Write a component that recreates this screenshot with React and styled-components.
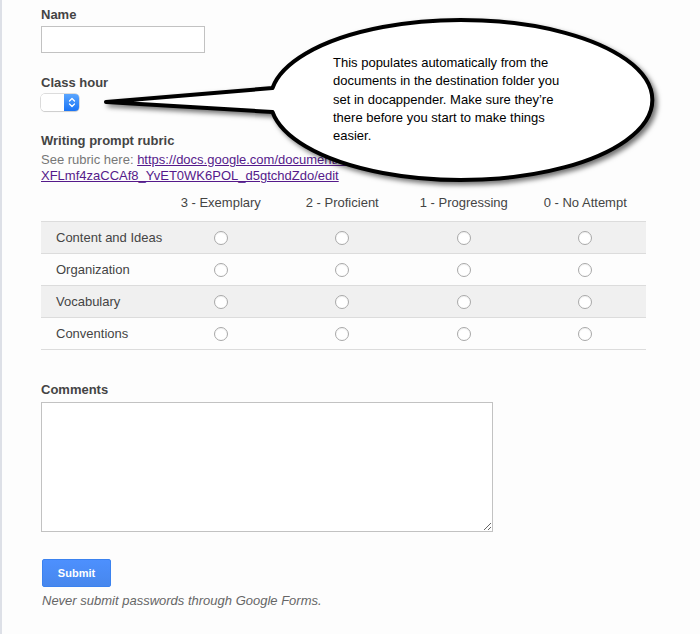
import React from "react";
import styled, { createGlobalStyle } from "styled-components";

const Global = createGlobalStyle`
  html, body { margin: 0; padding: 0; background: #fdfdfd; }
  body { font-family: "Liberation Sans", Arial, sans-serif; font-size: 13px; color: #444; }
`;

const Page = styled.div`
  position: relative;
  min-height: 634px;
  box-sizing: border-box;
  border-left: 2px solid #dde0e7;
  padding: 7px 0 0 39px;
`;

const Label = styled.div`
  font-weight: bold;
  font-size: 13px;
  line-height: 16px;
  color: #444;
  margin-top: ${(p) => p.$mt || 0}px;
`;

const TextInput = styled.input`
  display: block;
  box-sizing: border-box;
  width: 164px;
  height: 27px;
  margin-top: 3px;
  border: 1px solid #c2c2c2;
  background: #fff;
  padding: 0 4px;
`;

const Select = styled.div`
  display: flex;
  margin-top: 3px;
  width: 38px;
  height: 17px;
  box-sizing: border-box;
  border-radius: 4px;
  overflow: hidden;
  box-shadow: 0 0 0 0.5px #bcbcbc, 0 1px 1px rgba(0,0,0,0.12);
`;

const SelectBody = styled.div`
  flex: 1;
  background: #fff;
`;

const SelectArrows = styled.div`
  width: 15px;
  display: flex;
  align-items: center;
  justify-content: center;
  background: linear-gradient(#5aa6ff, #1a74f5);
`;

const Help = styled.div`
  margin-top: 3px;
  line-height: 16px;
  color: #777;
`;

const Link = styled.a`
  color: #551a8b;
  text-decoration: underline;
`;

const Grid = styled.table`
  margin-top: 5px;
  width: 605px;
  border-collapse: collapse;
  table-layout: fixed;
`;

const HeadCell = styled.th`
  height: 27px;
  padding: 0 0 5px;
  font-weight: normal;
  color: #444;
  text-align: center;
  border-bottom: 1px solid #dcdcdc;
`;

const Row = styled.tr`
  background: ${(p) => (p.$shade ? "#f0f0f0" : "transparent")};
`;

const RowLabel = styled.td`
  height: 31px;
  padding: 0 0 0 15px;
  color: #444;
  white-space: nowrap;
  border-bottom: 1px solid #dcdcdc;
`;

const RadioCell = styled.td`
  padding: 0;
  text-align: center;
  border-bottom: 1px solid #dcdcdc;
`;

const Radio = styled.span`
  display: inline-block;
  vertical-align: middle;
  width: 14px;
  height: 14px;
  box-sizing: border-box;
  border-radius: 50%;
  border: 1px solid #a9a9a9;
  background: #fff;
  box-shadow: inset 0 1px 1px rgba(0,0,0,0.06);
`;

const TextArea = styled.textarea`
  display: block;
  margin-top: 4px;
  width: 452px;
  height: 130px;
  box-sizing: border-box;
  border: 1px solid #c2c2c2;
  background: #fff;
  font-family: inherit;
`;

const SubmitButton = styled.button`
  display: block;
  margin: 27px 0 0 1px;
  width: 69px;
  height: 28px;
  border: 1px solid #3b82ef;
  border-radius: 2px;
  background: linear-gradient(#4d90fe, #4787ed);
  color: #fff;
  font-family: "Liberation Sans", Arial, sans-serif;
  font-weight: bold;
  font-size: 11px;
  padding: 0;
`;

const Note = styled.div`
  margin: 6px 0 0 1px;
  line-height: 16px;
  font-style: italic;
  color: #666;
`;

const Callout = styled.div`
  position: absolute;
  left: 0;
  top: 0;
  width: 700px;
  height: 200px;
  pointer-events: none;
`;

const CalloutShape = styled.svg`
  position: absolute;
  left: 0;
  top: 0;
`;

const CalloutText = styled.div`
  position: absolute;
  left: 331px;
  top: 54px;
  width: 290px;
  font-family: "Liberation Sans", Arial, sans-serif;
  font-size: 13px;
  line-height: 18.3px;
  color: #000;
  white-space: nowrap;
`;

const cols = ["3 - Exemplary", "2 - Proficient", "1 - Progressing", "0 - No Attempt"];
const rows = ["Content and Ideas", "Organization", "Vocabulary", "Conventions"];

export default function App() {
  return (
    <>
      <Global />
      <Page>
        <Label>Name</Label>
        <TextInput type="text" />
        <Label $mt={22}>Class hour</Label>
        <Select>
          <SelectBody />
          <SelectArrows>
            <svg width="8" height="11" viewBox="0 0 8 11">
              <path d="M1.5 4 L4 1.5 L6.5 4 M1.5 7 L4 9.5 L6.5 7" fill="none" stroke="#fff" strokeWidth="1.3" strokeLinecap="round" strokeLinejoin="round" />
            </svg>
          </SelectArrows>
        </Select>
        <Label $mt={22}>Writing prompt rubric</Label>
        <Help>
          See rubric here:{" "}
          <Link href="#">
            https://docs.google.com/document/d/1kQ7rPz
            <br />
            XFLmf4zaCCAf8_YvET0WK6POL_d5gtchdZdo/edit
          </Link>
        </Help>
        <Grid>
          <colgroup>
            <col style={{ width: 119 }} />
            <col />
            <col />
            <col />
            <col />
          </colgroup>
          <thead>
            <tr>
              <HeadCell />
              {cols.map((c) => (
                <HeadCell key={c}>{c}</HeadCell>
              ))}
            </tr>
          </thead>
          <tbody>
            {rows.map((r, i) => (
              <Row key={r} $shade={i % 2 === 0}>
                <RowLabel>{r}</RowLabel>
                {cols.map((c) => (
                  <RadioCell key={c}>
                    <Radio />
                  </RadioCell>
                ))}
              </Row>
            ))}
          </tbody>
        </Grid>
        <Label $mt={32}>Comments</Label>
        <TextArea />
        <SubmitButton>Submit</SubmitButton>
        <Note>Never submit passwords through Google Forms.</Note>

        <Callout>
          <CalloutShape width="700" height="200" viewBox="0 0 700 200">
            <defs>
              <filter id="sh" x="-10%" y="-20%" width="130%" height="150%">
                <feDropShadow dx="3" dy="3" stdDeviation="2.5" floodColor="#000" floodOpacity="0.55" />
              </filter>
            </defs>
            <path
              d="M270.5 88 L104 102 L270.5 112 A191 80 0 1 0 270.5 88 Z"
              fill="#fff"
              stroke="#000"
              strokeWidth="4"
              strokeLinejoin="round"
              filter="url(#sh)"
            />
          </CalloutShape>
          <CalloutText>
            This populates automatically from the
            <br />
            documents in the destination folder you
            <br />
            set in docappender. Make sure they’re
            <br />
            there before you start to make things
            <br />
            easier.
          </CalloutText>
        </Callout>
      </Page>
    </>
  );
}
